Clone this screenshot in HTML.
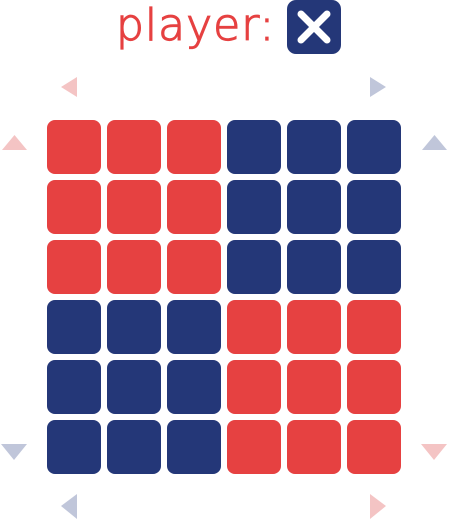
<!DOCTYPE html>
<html><head><style>
body{margin:0;width:449px;height:521px;background:#fff;position:relative;overflow:hidden}
.t{position:absolute;width:54px;height:54px;border-radius:8px}
.r{background:#e64141}.b{background:#243778}
.title{position:absolute;left:116px;top:0px;font-family:"DejaVu Sans","Liberation Sans",sans-serif;font-weight:200;font-size:44px;color:#e64141;letter-spacing:1px;-webkit-text-stroke:1.2px #e64141}
svg{position:absolute}
</style></head><body>
<div class="title">player:</div>
<svg style="left:287px;top:0" width="54" height="54"><rect width="54" height="54" rx="9" fill="#243778"/><path d="M14 14L40 40M40 14L14 40" stroke="#fff" stroke-width="7" stroke-linecap="round"/></svg>
<svg style="left:0;top:0" width="449" height="521">
<polygon points="77,77 77,97 61,87" fill="#f4c4c4"/>
<polygon points="370,77 370,97 386,87" fill="#c0c6da"/>
<polygon points="2,150 27,150 14.5,135" fill="#f4c4c4"/>
<polygon points="422,150 447,150 434.5,135" fill="#c0c6da"/>
<polygon points="1,444 27,444 14,460" fill="#c0c6da"/>
<polygon points="421,444 447,444 434,460" fill="#f4c4c4"/>
<polygon points="77,494 77,519 61,506" fill="#c0c6da"/>
<polygon points="370,494 370,519 386,506" fill="#f4c4c4"/>
</svg>
<div id="g"></div>
<script>
var m=["rrrbbb","rrrbbb","rrrbbb","bbbrrr","bbbrrr","bbbrrr"],h="";
for(var i=0;i<6;i++)for(var j=0;j<6;j++)h+='<div class="t '+m[i][j]+'" style="left:'+(47+60*j)+'px;top:'+(120+60*i)+'px"></div>';
document.getElementById("g").innerHTML=h;
</script>
</body></html>
